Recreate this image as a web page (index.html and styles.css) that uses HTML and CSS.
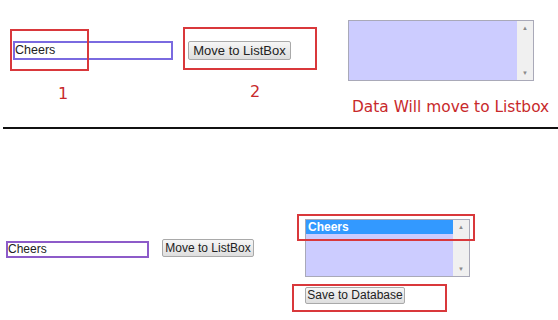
FILE: index.html
```html
<!DOCTYPE html>
<html lang="en">
<head>
    <meta charset="UTF-8">
    <meta name="viewport" content="width=device-width, initial-scale=1.0">
    <title>Move to ListBox</title>
    <link rel="stylesheet" href="styles.css">
</head>
<body>
    <!-- Step 1: before moving -->
    <div class="panel panel-top">
        <div class="row">
            <div class="text-box top-text">Cheers</div>
            <div class="plain-button top-button">Move to ListBox</div>
            <div class="list-col">
                <div class="list-box top-list">
                    <div class="list-items"></div>
                    <div class="scroll-bar">
                        <span class="arrow">&#9650;</span>
                        <span class="arrow">&#9660;</span>
                    </div>
                </div>
                <div class="note">Data Will move to Listbox</div>
            </div>
        </div>
        <div class="step step-one">1</div>
        <div class="step step-two">2</div>
        <div class="mark mark-text"></div>
        <div class="mark mark-button"></div>
    </div>

    <div class="divider"></div>

    <!-- Step 2: after moving -->
    <div class="panel panel-bottom">
        <div class="row">
            <div class="text-box bottom-text">Cheers</div>
            <div class="plain-button bottom-button">Move to ListBox</div>
            <div class="list-col bottom-col">
                <div class="list-box bottom-list">
                    <div class="list-items">
                        <div class="list-item selected">Cheers</div>
                    </div>
                    <div class="scroll-bar">
                        <span class="arrow">&#9650;</span>
                        <span class="arrow">&#9660;</span>
                    </div>
                </div>
                <div class="plain-button save-button">Save to Database</div>
            </div>
        </div>
        <div class="mark mark-item"></div>
        <div class="mark mark-save"></div>
    </div>
</body>
</html>
```

FILE: styles.css
```css
body {
    font-family: Arial, 'Liberation Sans', sans-serif;
    margin: 0;
    background-color: white;
    color: #222;
    width: 558px;
    height: 320px;
    overflow: hidden;
}

.panel {
    position: relative;
}

.panel-top {
    height: 127px;
}

.panel-bottom {
    height: 191px;
}

.row {
    display: flex;
    align-items: flex-start;
}

.panel-top .row {
    padding-top: 20px;
}

.panel-bottom .row {
    padding-top: 90px;
}

.text-box {
    box-sizing: border-box;
    font-size: 12.5px;
    line-height: 15px;
    padding-left: 0;
    background-color: white;
    color: #222;
}

.top-text {
    width: 160px;
    height: 19px;
    margin-left: 13px;
    margin-top: 21px;
    border: 2px solid #7a6ae0;
}

.bottom-text {
    width: 143px;
    height: 17px;
    margin-left: 6px;
    margin-top: 22px;
    font-size: 12px;
    line-height: 13px;
    border: 2px solid #8d5bc9;
}

.plain-button {
    box-sizing: border-box;
    border: 1px solid #a9a9a9;
    border-radius: 2px;
    background: linear-gradient(#f6f6f6, #dedede);
    color: #222;
    text-align: center;
    white-space: nowrap;
}

.top-button {
    width: 103px;
    height: 19px;
    margin-left: 15px;
    margin-top: 21px;
    font-size: 13px;
    line-height: 17px;
}

.bottom-button {
    width: 92px;
    height: 18px;
    margin-left: 13px;
    margin-top: 20px;
    font-size: 12px;
    line-height: 16px;
}

.list-col {
    display: flex;
    flex-direction: column;
    margin-left: 57px;
}

.bottom-col {
    margin-left: 51px;
}

.list-box {
    box-sizing: border-box;
    display: flex;
    border: 1px solid #a9a9b8;
    background-color: #ccccff;
}

.top-list {
    width: 186px;
    height: 61px;
}

.bottom-list {
    width: 165px;
    height: 58px;
}

.list-items {
    flex: 1;
}

.list-item {
    font-size: 12px;
    line-height: 14px;
    padding-left: 2px;
}

.selected {
    background-color: #3399ff;
    color: white;
    font-weight: bold;
}

.scroll-bar {
    width: 16px;
    background-color: #f0f0f0;
    display: flex;
    flex-direction: column;
    justify-content: space-between;
    align-items: center;
    padding: 3px 0;
}

.arrow {
    font-size: 6px;
    line-height: 8px;
    color: #8a8a8a;
}

.note {
    font-family: 'DejaVu Sans', Verdana, sans-serif;
    font-size: 15.4px;
    color: #c8292b;
    margin-top: 17px;
    margin-left: 4px;
    white-space: nowrap;
}

.save-button {
    width: 100px;
    height: 17px;
    margin-top: 10px;
    font-size: 12px;
    line-height: 15px;
}

.step {
    position: absolute;
    font-family: 'DejaVu Sans', Verdana, sans-serif;
    font-size: 16px;
    color: #c8292b;
}

.step-one {
    left: 58px;
    top: 84px;
}

.step-two {
    left: 250px;
    top: 82px;
}

.mark {
    position: absolute;
    box-sizing: border-box;
    border: 2px solid #d9383b;
}

.mark-text {
    left: 10px;
    top: 29px;
    width: 79px;
    height: 42px;
}

.mark-button {
    left: 183px;
    top: 27px;
    width: 134px;
    height: 43px;
}

.divider {
    height: 2px;
    margin-left: 3px;
    background-color: #111;
}

.mark-item {
    left: 297px;
    top: 85px;
    width: 178px;
    height: 27px;
}

.mark-save {
    left: 292px;
    top: 155px;
    width: 155px;
    height: 28px;
}
```
